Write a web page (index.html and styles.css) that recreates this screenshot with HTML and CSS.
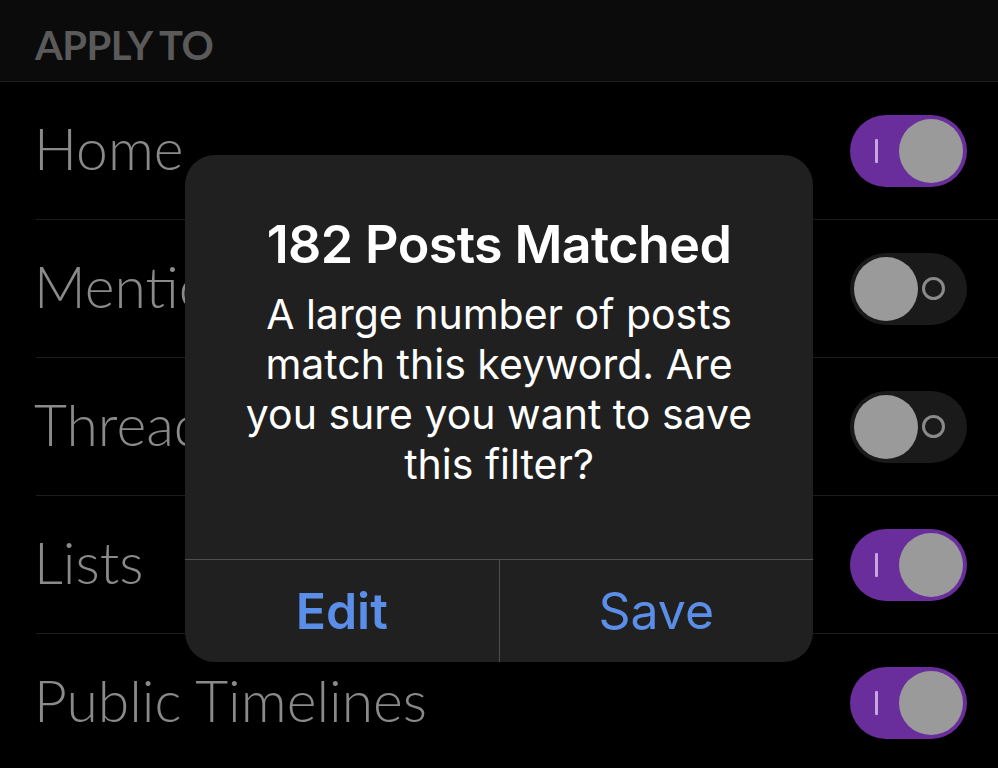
FILE: index.html
```html
<!DOCTYPE html>
<html lang="en">
<head>
<meta charset="utf-8">
<title>Apply To</title>
<link rel="stylesheet" href="styles.css">
</head>
<body>
<div class="screen">
  <div class="section-header">APPLY TO</div>
  <ul class="rows">
    <li class="row"><span class="label">Home</span><span class="toggle on"><span class="mark-on"></span><span class="knob"></span></span></li>
    <li class="row"><span class="label">Mentions</span><span class="toggle off"><span class="knob"></span><span class="mark-off"></span></span></li>
    <li class="row"><span class="label">Threads</span><span class="toggle off"><span class="knob"></span><span class="mark-off"></span></span></li>
    <li class="row"><span class="label">Lists</span><span class="toggle on"><span class="mark-on"></span><span class="knob"></span></span></li>
    <li class="row"><span class="label">Public Timelines</span><span class="toggle on"><span class="mark-on"></span><span class="knob"></span></span></li>
  </ul>
  <div class="alert">
    <div class="alert-content">
      <h2 class="alert-title">182 Posts Matched</h2>
      <p class="alert-message">A large number of posts match this keyword. Are you sure you want to save this filter?</p>
    </div>
    <div class="alert-actions">
      <button class="alert-btn primary">Edit</button>
      <button class="alert-btn">Save</button>
    </div>
  </div>
</div>
</body>
</html>
```

FILE: styles.css
```css
html, body {
  margin: 0;
  padding: 0;
  background: #000;
}
.screen {
  position: relative;
  width: 998px;
  height: 768px;
  overflow: hidden;
  background: #000;
  font-family: Lato, "Open Sans", sans-serif;
}
.section-header {
  height: 82px;
  box-sizing: border-box;
  padding: 21px 0 0 35px;
  background: #0b0b0b;
  border-bottom: 1px solid #1d1d1d;
  color: #5a5a5a;
  font-weight: 700;
  font-size: 40px;
  line-height: 48px;
  letter-spacing: -0.5px;
}
.rows {
  list-style: none;
  margin: 0;
  padding: 0 0 0 36px;
}
.row {
  display: flex;
  align-items: center;
  justify-content: space-between;
  height: 138px;
  box-sizing: border-box;
  border-bottom: 1px solid #1c1c1c;
  padding-right: 31px;
}
.label {
  color: #8a8a8a;
  font-size: 57px;
  font-weight: 300;
  margin-left: -2px;
  margin-top: -6px;
}
.toggle {
  position: relative;
  display: flex;
  align-items: center;
  width: 117px;
  height: 72px;
  box-sizing: border-box;
  padding: 0 4px;
  border-radius: 36px;
}
.toggle.on {
  background: #6a2e9c;
  justify-content: space-between;
}
.toggle.off {
  background: #1a1a1a;
  justify-content: space-between;
}
.knob {
  width: 64px;
  height: 64px;
  border-radius: 50%;
  background: #9a9a9a;
}
.mark-on {
  width: 3px;
  height: 24px;
  margin-left: 21px;
  background: #c9a4e3;
  border-radius: 1px;
}
.mark-off {
  width: 17px;
  height: 17px;
  margin-right: 18px;
  border: 3px solid #8a8a8a;
  border-radius: 50%;
}
.alert {
  position: absolute;
  left: 185px;
  top: 155px;
  width: 628px;
  height: 507px;
  background: #202020;
  border-radius: 30px;
  display: flex;
  flex-direction: column;
  font-family: Inter, "Noto Sans", sans-serif;
  overflow: hidden;
}
.alert-content {
  flex: 1;
  padding: 60px 54px 0;
  text-align: center;
  color: #fff;
}
.alert-title {
  margin: 0;
  font-size: 52px;
  font-weight: 600;
  line-height: 60px;
  letter-spacing: -0.6px;
}
.alert-message {
  margin: 14px 0 0;
  font-size: 41px;
  font-weight: 400;
  line-height: 50px;
}
.alert-actions {
  display: flex;
  height: 102px;
  border-top: 1px solid #4e4e4e;
}
.alert-btn {
  flex: 1;
  background: transparent;
  border: 0;
  margin: 0;
  padding: 0;
  color: #5b8ee8;
  font-family: Inter, "Noto Sans", sans-serif;
  font-size: 50px;
  font-weight: 400;
}
.alert-btn + .alert-btn {
  border-left: 1px solid #4e4e4e;
}
.alert-btn.primary {
  font-weight: 600;
}
```
